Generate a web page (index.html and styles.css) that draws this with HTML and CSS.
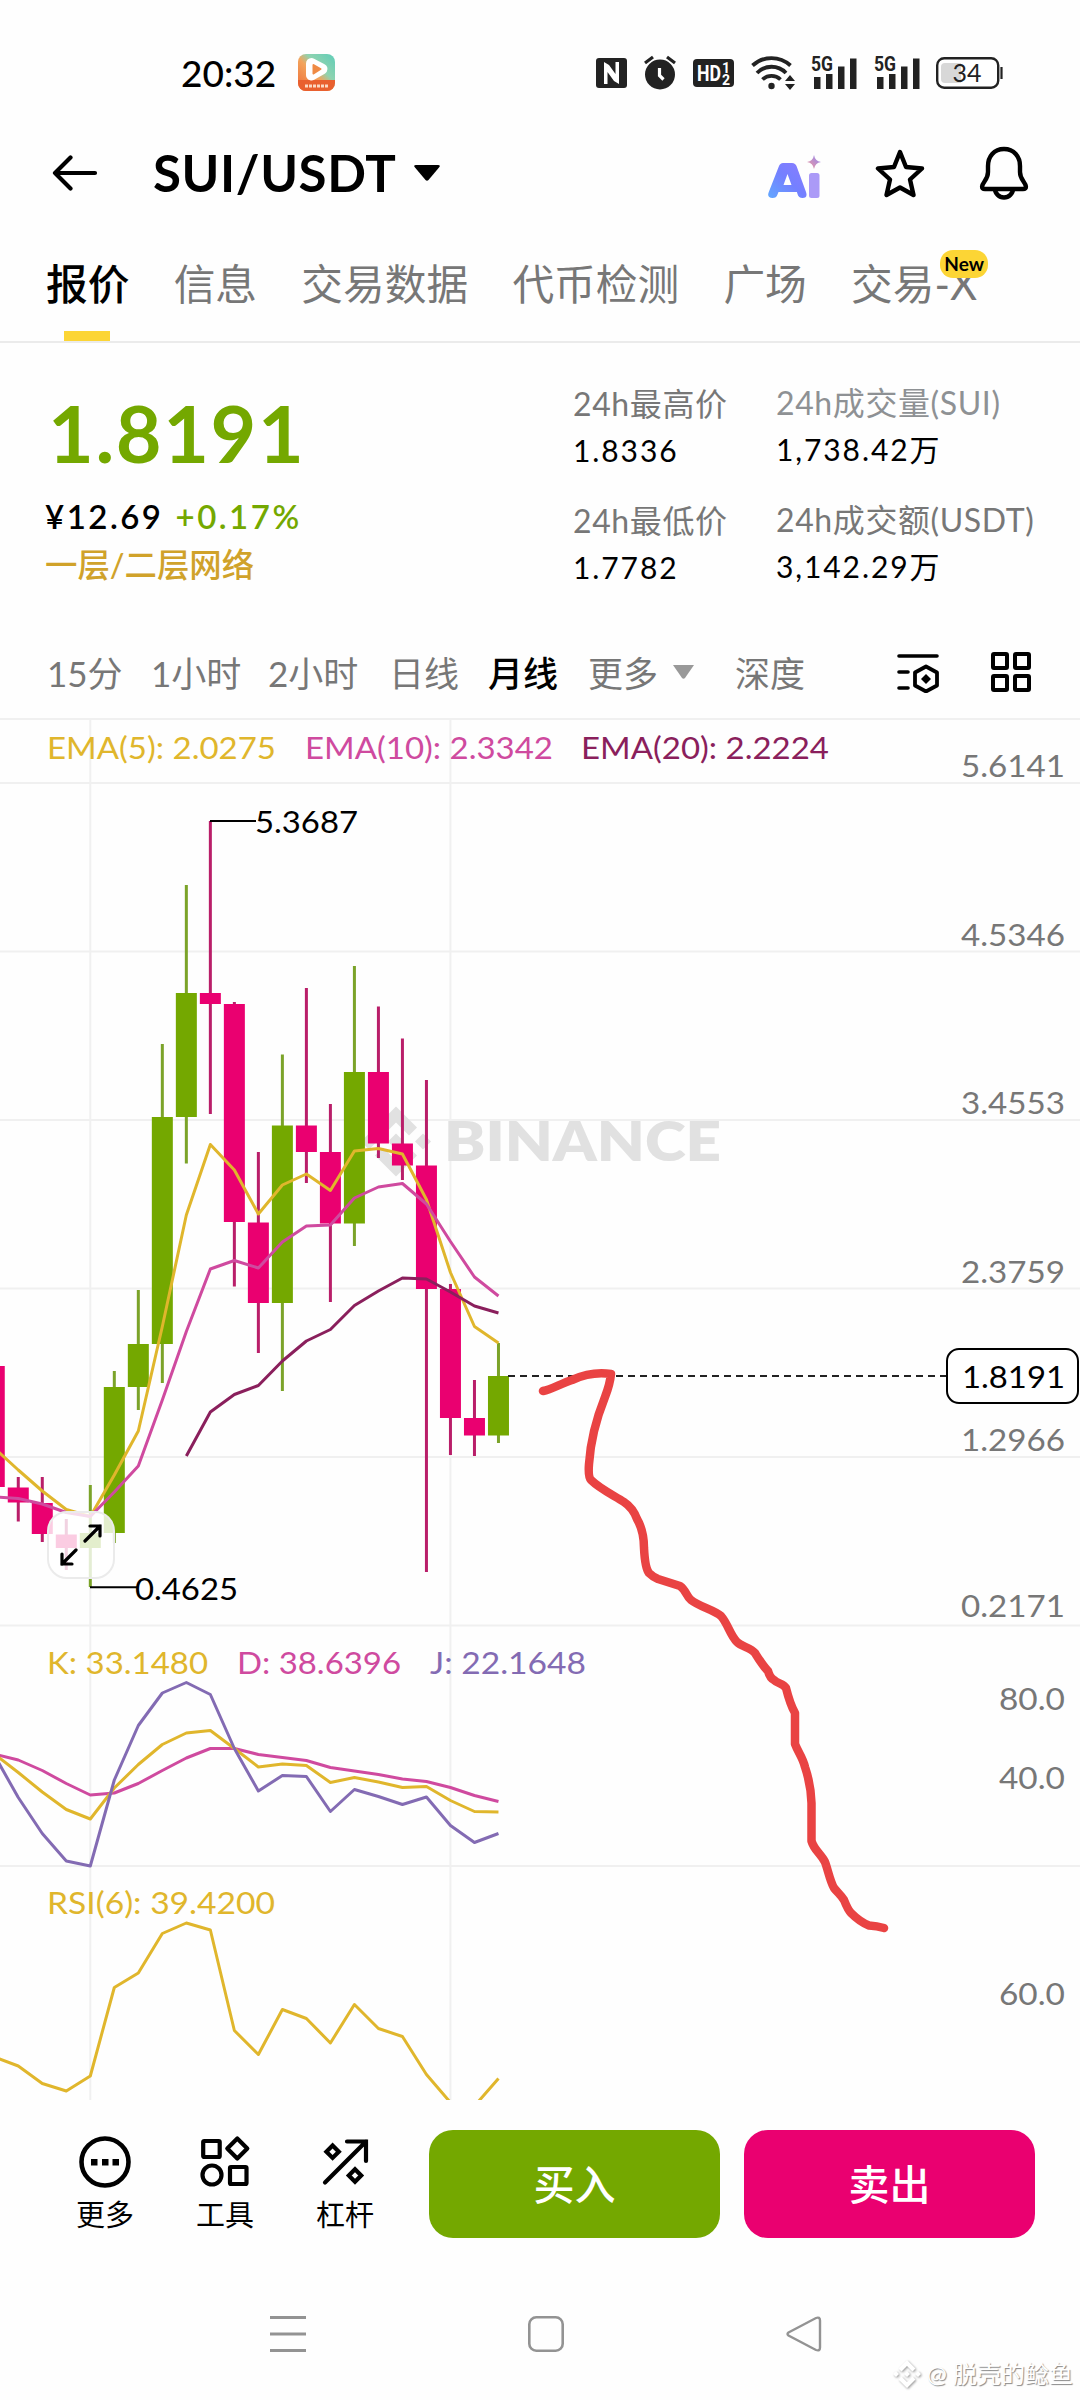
FILE: index.html
```html
<!DOCTYPE html>
<html lang="zh-CN">
<head>
<meta charset="UTF-8">
<meta name="viewport" content="width=device-width, initial-scale=1.0">
<title>SUI/USDT</title>
<link rel="stylesheet" href="styles.css">
</head>
<body>
<div class="screen">

<!-- Status bar -->
<div class="status-bar">
    <span class="time">20:32</span>
    <svg class="app-icon" width="37" height="37" viewBox="0 0 37 37">
        <defs>
            <linearGradient id="app-bg" x1="0" y1="1" x2="1" y2="0">
                <stop offset="0" stop-color="#ee6a35"/>
                <stop offset=".45" stop-color="#f3a45c"/>
                <stop offset=".62" stop-color="#8fd3b0"/>
                <stop offset="1" stop-color="#5fcdb8"/>
            </linearGradient>
        </defs>
        <rect width="37" height="37" rx="8" fill="url(#app-bg)"/>
        <path d="M0 26h37v3a8 8 0 0 1-8 8H8a8 8 0 0 1-8-8z" fill="#e9602f"/>
        <path d="M13.500 9.500l10.500 5.500-10.500 6z" fill="#fff" stroke="#fff" stroke-width="11" stroke-linejoin="round"/>
        <path d="M15.500 11l7 4-7 4.500z" fill="#ef8b45" stroke="#ef8b45" stroke-width="2" stroke-linejoin="round"/>
        <path d="M7 32h23" stroke="#fbd9c4" stroke-width="3" stroke-dasharray="3 1"/>
    </svg>
    <div class="status-icons">
        <svg width="32" height="32" viewBox="0 0 32 32">
            <rect x="0" y="1" width="31" height="30" rx="3" fill="#222"/>
            <path d="M8.500 27V7.500L20 17M11.500 12V6l11 19V5M12.500 21l8.500 5" fill="none" stroke="#fff" stroke-width="2.400" visibility="hidden"/>
            <path d="M8 27V5l5 3 6.500 9V5h3.500v22l-5-3-6.500-9v12z" fill="#fff"/>
        </svg>
        <svg width="32" height="35" viewBox="0 0 32 35">
            <circle cx="15" cy="19.500" r="15" fill="#222"/>
            <path d="M0 8l8-6M30 8l-8-6" stroke="#222" stroke-width="3.200"/>
            <path d="M14.500 13v7.500l4 4" fill="none" stroke="#fff" stroke-width="3.200"/>
        </svg>
        <svg width="41" height="30" viewBox="0 0 41 30">
            <rect y="1" width="41" height="28" rx="4" fill="#222"/>
            <text class="hd" x="4" y="22.500" textLength="24" lengthAdjust="spacingAndGlyphs">HD</text>
            <text class="hd-num" x="29" y="15">1</text>
            <text class="hd-num" x="29" y="27">2</text>
        </svg>
        <svg width="44" height="35" viewBox="0 0 44 35">
            <path d="M1.500 10.500a28 28 0 0 1 38 0M6 18a20 20 0 0 1 29 0M11.500 24.500a13 13 0 0 1 18 0" fill="none" stroke="#222" stroke-width="3.800"/>
            <circle cx="20.500" cy="31" r="3.200" fill="#222"/>
            <path d="M34 26l5-6 5 6zM34 29h10l-5 6z" fill="#222"/>
        </svg>
        <svg width="46" height="36" viewBox="0 0 46 36">
            <text class="sig" x="0" y="16" textLength="22" lengthAdjust="spacingAndGlyphs">5G</text>
            <path d="M3 22h6.500v12H3zM15 19h6.500v15H15zM27 11.500h6.500V34H27zM39 3.500h6.500V34H39z" fill="#222"/>
        </svg>
        <svg width="46" height="36" viewBox="0 0 46 36">
            <text class="sig" x="0" y="16" textLength="22" lengthAdjust="spacingAndGlyphs">5G</text>
            <path d="M3 22h6.500v12H3zM15 19h6.500v15H15zM27 11.500h6.500V34H27zM39 3.500h6.500V34H39z" fill="#222"/>
        </svg>
        <svg width="67" height="32" viewBox="0 0 67 32">
            <rect x="1.200" y="1.200" width="61" height="29.500" rx="7" fill="#fff" stroke="#222" stroke-width="2.400"/>
            <path d="M9 6h16v20H9a4 4 0 0 1-4-4V10a4 4 0 0 1 4-4z" fill="#d8d8d8"/>
            <path d="M65.500 10v12" stroke="#222" stroke-width="2.200"/>
            <text class="bat" x="31" y="24.500">34</text>
        </svg>
    </div>
</div>

<!-- Header -->
<div class="header">
    <svg class="back" width="46" height="36" viewBox="0 0 46 36">
        <path d="M43 18H3M18.500 2.500L3 18l15.500 15.500" fill="none" stroke="#000" stroke-width="4.200" stroke-linecap="round" stroke-linejoin="round"/>
    </svg>
    <h1 class="pair">SUI/USDT</h1>
    <svg class="pair-caret" width="26" height="16" viewBox="0 0 26 16">
        <path d="M2 0h22q3 0 1 2.500L14.500 15q-1.500 1.500-3 0L1 2.500Q-1 0 2 0z"/>
    </svg>
    <div class="header-icons">
        <svg width="53" height="56" viewBox="0 0 53 56">
            <defs>
                <linearGradient id="ai" x1="0" y1="1" x2="1" y2="0">
                    <stop offset="0" stop-color="#62a8ff"/>
                    <stop offset=".5" stop-color="#7480ff"/>
                    <stop offset="1" stop-color="#8a7cff"/>
                </linearGradient>
                <linearGradient id="ai-dot" x1="0" y1="1" x2="1" y2="0">
                    <stop offset="0" stop-color="#f39a9a"/>
                    <stop offset="1" stop-color="#8f86f5"/>
                </linearGradient>
            </defs>
            <path d="M15 18h9q3.500 0 4.700 3.500L38 47q2 6-3.500 6-4 0-5-4l-.6-2H10.500l-1 2.500Q8.500 53 4.500 53-1.500 53 .8 47l10-25.500Q12 18 15 18zM19.500 29l-4 11h8z" fill="url(#ai)" fill-rule="evenodd"/>
            <rect x="41" y="28" width="10.500" height="25" rx="2.500" fill="#ab9af7"/>
            <path d="M46 10q1 6 7 7-6 1-7 7-1-6-7-7 6-1 7-7z" fill="url(#ai-dot)"/>
        </svg>
        <svg width="50" height="50" viewBox="0 0 50 50">
            <path d="M25 4l6 15 16 1.500-12 11 3.500 15.500L25 39.500 11.500 47 15 31.500 3 20.500 19 19z" fill="none" stroke="#000" stroke-width="4.400" stroke-linejoin="round"/>
        </svg>
        <svg width="50" height="54" viewBox="0 0 50 54">
            <path d="M25 3C15 3 9 10.500 9 20v6c0 4-1 6-3.500 9.500C3 39 1.500 43 6 43h38c4.500 0 3-4 .5-7.500C42 32 41 30 41 26v-6C41 10.500 35 3 25 3z" fill="none" stroke="#000" stroke-width="4.400"/>
            <path d="M16 43c0 4.500 4 8.500 9 8.500s9-4 9-8.500" fill="none" stroke="#000" stroke-width="4.400"/>
        </svg>
    </div>
</div>

<!-- Tabs -->
<div class="tabs">
    <div class="tab active">报价</div>
    <div class="tab">信息</div>
    <div class="tab">交易数据</div>
    <div class="tab">代币检测</div>
    <div class="tab">广场</div>
    <div class="tab">交易-X<span class="new-badge">New</span></div>
</div>

<!-- Price and 24h stats -->
<div class="ticker">
    <div class="price-box">
        <div class="price">1.8191</div>
        <div class="price-sub"><span class="cny">¥12.69</span><span class="change">+0.17%</span></div>
        <div class="tag">一层/二层网络</div>
    </div>
    <div class="stats stats-price">
        <div class="stat"><div class="label">24h最高价</div><div class="value">1.8336</div></div>
        <div class="stat"><div class="label">24h最低价</div><div class="value">1.7782</div></div>
    </div>
    <div class="stats">
        <div class="stat"><div class="label light">24h成交量(SUI)</div><div class="value">1,738.42万</div></div>
        <div class="stat"><div class="label">24h成交额(USDT)</div><div class="value">3,142.29万</div></div>
    </div>
</div>

<!-- Intervals -->
<div class="intervals">
    <span class="i-15m">15分</span>
    <span class="i-1h">1小时</span>
    <span class="i-2h">2小时</span>
    <span class="i-1d">日线</span>
    <span class="i-1m active">月线</span>
    <span class="i-more">更多<svg width="21" height="14" viewBox="0 0 21 14"><path d="M0 0h21L12 13q-1.500 1.500-3 0z" fill="#999"/></svg></span>
    <span class="i-depth">深度</span>
    <div class="chart-tools">
        <svg width="43" height="42" viewBox="0 0 43 42">
            <path d="M2 5h38M2 21h9M2 37h9" stroke="#000" stroke-width="3.600" stroke-linecap="round"/>
            <path d="M29 15.500l11 6v13l-11 6-11-6v-13z" fill="none" stroke="#000" stroke-width="3.800" stroke-linejoin="round"/>
            <path d="M29 23l5 5-5 5-5-5z"/>
        </svg>
        <svg width="40" height="40" viewBox="0 0 40 40" fill="none" stroke="#000" stroke-width="4">
            <rect x="2" y="2" width="14" height="14" rx="1"/>
            <rect x="24" y="2" width="14" height="14" rx="1"/>
            <rect x="2" y="24" width="14" height="14" rx="1"/>
            <rect x="24" y="24" width="14" height="14" rx="1"/>
        </svg>
    </div>
</div>

<!-- Chart -->
<svg class="chart" width="1080" height="1382" viewBox="0 718 1080 1382">
    <g class="grid">
        <path d="M0 719H1080M0 783H1080M0 951.500H1080M0 1120H1080M0 1288.500H1080M0 1457H1080M0 1625.500H1080M0 1866H1080M90.300 719V2100M450.400 719V2100"/>
    </g>

    <g class="logo-mark">
        <path transform="translate(396 1141.500)" d="M-21-14L0-35 21-14 13-6 0-19-13-6zM-21 14L0 35 21 14 13 6 0 19-13 6zM-35 0l8-8 8 8-8 8zM19 0l8-8 8 8-8 8zM-8 0l8-8 8 8-8 8z"/>
        <text x="444" y="1161" textLength="277" lengthAdjust="spacingAndGlyphs">BINANCE</text>
    </g>

    <g id="candles"></g>
    <g id="lines"></g>

    <g class="extreme">
        <path d="M210 821H256M90 1587.300H137"/>
        <text x="255" y="833" textLength="103" lengthAdjust="spacingAndGlyphs">5.3687</text>
        <text x="135" y="1600" textLength="103" lengthAdjust="spacingAndGlyphs">0.4625</text>
    </g>

    <g class="legend">
        <text class="yellow" x="47" y="759" textLength="229" lengthAdjust="spacingAndGlyphs">EMA(5): 2.0275</text>
        <text class="pink" x="305" y="759" textLength="248" lengthAdjust="spacingAndGlyphs">EMA(10): 2.3342</text>
        <text class="plum" x="581" y="759" textLength="248" lengthAdjust="spacingAndGlyphs">EMA(20): 2.2224</text>
        <text class="yellow" x="47" y="1674" textLength="161" lengthAdjust="spacingAndGlyphs">K: 33.1480</text>
        <text class="pink" x="237" y="1674" textLength="164" lengthAdjust="spacingAndGlyphs">D: 38.6396</text>
        <text class="violet" x="430" y="1674" textLength="156" lengthAdjust="spacingAndGlyphs">J: 22.1648</text>
        <text class="yellow" x="47" y="1914" textLength="228" lengthAdjust="spacingAndGlyphs">RSI(6): 39.4200</text>
    </g>

    <g class="axis">
        <text x="961" y="777" textLength="104" lengthAdjust="spacingAndGlyphs">5.6141</text>
        <text x="961" y="946" textLength="104" lengthAdjust="spacingAndGlyphs">4.5346</text>
        <text x="961" y="1114" textLength="104" lengthAdjust="spacingAndGlyphs">3.4553</text>
        <text x="961" y="1283" textLength="104" lengthAdjust="spacingAndGlyphs">2.3759</text>
        <text x="961" y="1451" textLength="104" lengthAdjust="spacingAndGlyphs">1.2966</text>
        <text x="961" y="1617" textLength="104" lengthAdjust="spacingAndGlyphs">0.2171</text>
        <text x="999" y="1710" textLength="66" lengthAdjust="spacingAndGlyphs">80.0</text>
        <text x="999" y="1789" textLength="66" lengthAdjust="spacingAndGlyphs">40.0</text>
        <text x="999" y="2005" textLength="66" lengthAdjust="spacingAndGlyphs">60.0</text>
    </g>

    <!-- last price -->
    <path class="last-line" d="M508 1376H947"/>
    <rect class="last-box" x="947" y="1349" width="131" height="54" rx="12"/>
    <text class="last-text" x="962" y="1388" textLength="103" lengthAdjust="spacingAndGlyphs">1.8191</text>

    <!-- fullscreen button -->
    <rect class="full-btn" x="48" y="1512" width="66" height="66" rx="19"/>
    <path class="full-arrows" d="M85 1541L100 1526M90 1526H100V1536M76 1550L62 1564M62 1554V1564H72"/>

    <!-- hand drawn line -->
    <path class="sketch" d="M543 1391C552 1389 560 1384 572 1380Q592 1371 611 1374Q610 1384 605 1397Q591 1432 589 1464Q588 1477 591 1480C600 1489 615 1496 624 1502Q633 1508 637 1519Q644 1531 644 1548Q645 1568 649 1573Q653 1577 658 1579L680 1586C686 1590 686 1596 691 1600C700 1607 714 1610 721 1616C728 1624 730 1635 737 1642C742 1647 750 1647 755 1653C760 1661 763 1666 768 1671Q770 1678 774 1680C778 1684 783 1683 786 1688C788 1696 791 1706 795 1713V1744C798 1752 803 1758 805 1767Q811 1785 811.500 1803V1841C814 1850 821 1854 825 1862C828 1870 830 1881 834 1888C838 1893 841 1895 844 1900C846 1905 848 1910 851 1913Q860 1922 869 1925.500Q877 1926 884 1928"/>
</svg>

<!-- Bottom actions -->
<div class="actions">
    <div class="action">
        <svg width="52" height="54" viewBox="0 0 52 54">
            <circle cx="26" cy="27" r="23.500" fill="none" stroke="#000" stroke-width="4.600"/>
            <path d="M12 24h6.500v6.500H12zM23 24h6.500v6.500H23zM33.500 24H40v6.500h-6.500z"/>
        </svg>
        <span>更多</span>
    </div>
    <div class="action">
        <svg width="52" height="54" viewBox="0 0 52 54" fill="none" stroke="#000" stroke-width="4.200">
            <rect x="4.200" y="6" width="16.500" height="16" rx="1"/>
            <path d="M38.300 3.500l10 10-10 10-10-10z" stroke-linejoin="round"/>
            <circle cx="13" cy="40" r="9.500"/>
            <rect x="31" y="32" width="16.500" height="17" rx="1"/>
        </svg>
        <span>工具</span>
    </div>
    <div class="action">
        <svg width="52" height="54" viewBox="0 0 52 54" fill="none" stroke="#000" stroke-width="4.200">
            <path d="M6 47.500L47 6.500M28 6.500H47V26" stroke-linecap="round"/>
            <path d="M13.600 10.500l6.200 6.200-6.200 6.200-6.200-6.200zM36 34.300l6.200 6.200-6.200 6.200-6.200-6.200z"/>
        </svg>
        <span>杠杆</span>
    </div>
    <button class="btn buy">买入</button>
    <button class="btn sell">卖出</button>
</div>

<!-- System navigation -->
<div class="sys-nav">
    <svg width="36" height="38" viewBox="0 0 36 38"><path d="M0 2.500h36M0 19h36M0 35.500h36" stroke="#939393" stroke-width="3"/></svg>
    <svg width="36" height="38" viewBox="0 0 36 38"><rect x="1.300" y="2.300" width="33.400" height="33.400" rx="7" fill="none" stroke="#939393" stroke-width="2.600"/></svg>
    <svg width="36" height="38" viewBox="0 0 36 38"><path d="M2.500 17.500L30 3q4-1.500 4 2.500v27q0 4-4 2.500L2.500 20.500q-2-1.500 0-3z" fill="none" stroke="#939393" stroke-width="2.400"/></svg>
</div>

<div class="author">
    <svg width="28" height="28" viewBox="-14 -14 28 28">
        <path d="M-8.500-5.500L0-14l8.500 8.500-3 3L0-8l-5.500 5.500zM-8.500 5.500L0 14l8.500-8.500-3-3L0 8l-5.500-5.500zM-14 0l3-3 3 3-3 3zM8 0l3-3 3 3-3 3zM-3 0l3-3 3 3-3 3z" fill="#fff"/>
    </svg>
    <span>@ 脱壳的鲶鱼</span>
</div>

</div>

<script>
var STEP = 24.01;
var X0 = 90.3;

// [slot, high, top, bottom, low, up]
var candles = [
    [-4, 1366, 1366, 1487, 1487, 0],
    [-3, 1477, 1487.5, 1502.5, 1521.5, 0],
    [-2, 1477, 1503, 1534, 1542, 0],
    [-1, 1519, 1534.5, 1548, 1570, 0],
    [0, 1485, 1533, 1548, 1587, 1],
    [1, 1371, 1387, 1533, 1543, 1],
    [2, 1290, 1344, 1387, 1410, 1],
    [3, 1044, 1117, 1344, 1383, 1],
    [4, 885, 993, 1117, 1163.5, 1],
    [5, 821, 993, 1004, 1114, 0],
    [6, 1002, 1004, 1222, 1286.5, 0],
    [7, 1152, 1222.5, 1303, 1353, 0],
    [8, 1054.5, 1125.5, 1303, 1391, 1],
    [9, 988, 1125.5, 1152, 1183, 0],
    [10, 1104, 1152, 1223.5, 1302, 0],
    [11, 966, 1072, 1223.5, 1246, 1],
    [12, 1006.5, 1072, 1143.5, 1158, 0],
    [13, 1038.5, 1143.5, 1165.5, 1180, 0],
    [14, 1080, 1165.5, 1289, 1572, 0],
    [15, 1284, 1289, 1418, 1455, 0],
    [16, 1380, 1418, 1435.5, 1456, 0],
    [17, 1343, 1376, 1435.5, 1443, 1]
];

// each series starts at its first slot
var series = [
    { color: '#e0b62c', from: -4, y: [1448, 1470, 1491, 1509.5, 1516.5, 1475, 1431, 1326.5, 1215, 1144.5, 1170, 1214, 1185, 1174, 1190.5, 1151, 1148.5, 1154, 1199.5, 1272.5, 1326.5, 1343] },
    { color: '#cf4a9f', from: -4, y: [1497, 1498.5, 1504, 1512.5, 1516.5, 1492, 1466, 1400, 1331.5, 1269, 1260.5, 1268, 1242, 1226, 1225, 1198, 1187, 1183.5, 1204, 1241.5, 1277, 1296] },
    { color: '#8a1f5c', from: 4, y: [1456, 1412, 1394.5, 1385.5, 1361, 1341, 1329.5, 1305.5, 1291, 1278, 1279, 1292, 1306, 1313] },
    { color: '#cf4a9f', from: -4, y: [1754, 1760, 1770.5, 1783.5, 1795, 1793, 1783.5, 1770.5, 1758, 1748.5, 1748.5, 1754.5, 1757.5, 1760.5, 1767.5, 1771, 1774.5, 1779, 1781.5, 1787.5, 1795.5, 1801.5] },
    { color: '#e0b62c', from: -4, y: [1754, 1772.5, 1792, 1809.5, 1819, 1788, 1764.5, 1744.5, 1733, 1730.5, 1748.5, 1767, 1764, 1765.5, 1782.5, 1777.5, 1782, 1787.5, 1786.5, 1800.5, 1811.5, 1812] },
    { color: '#836bb3', from: -4, y: [1755, 1797.5, 1833.5, 1861, 1866, 1780, 1725.5, 1693, 1682.5, 1694.5, 1748.5, 1791, 1775.5, 1776.5, 1811.5, 1789.5, 1796.5, 1804.5, 1797, 1825.5, 1842.5, 1833.5] },
    { color: '#e0b62c', from: -4, y: [2057, 2066, 2083.5, 2091, 2076, 1987.5, 1973, 1933.5, 1923, 1930, 2030.5, 2054.5, 2009.5, 2018.5, 2043, 2004.5, 2028.5, 2036.5, 2074.5, 2102.5, 2106, 2078.5] }
];

function slotX(i) {
    return X0 + i * STEP;
}

var html = '';
candles.forEach(function(c) {
    var x = slotX(c[0]);
    var cls = c[5] ? 'up' : 'down';
    html += '<rect class="wick-' + cls + '" x="' + (x - 1.5) + '" y="' + c[1] + '" width="3" height="' + (c[4] - c[1]) + '"/>';
    html += '<rect class="body-' + cls + '" x="' + (x - 10.5) + '" y="' + c[2] + '" width="21" height="' + (c[3] - c[2]) + '"/>';
});
document.getElementById('candles').innerHTML = html;

html = '';
series.forEach(function(s) {
    var points = s.y.map(function(y, i) {
        return slotX(s.from + i) + ',' + y;
    });
    html += '<polyline points="' + points.join(' ') + '" stroke="' + s.color + '"/>';
});
document.getElementById('lines').innerHTML = html;
</script>

</body>
</html>
```
FILE: styles.css
```css
* {
    box-sizing: border-box;
}

body {
    margin: 0;
    background: #fff;
    font-family: Lato, "Noto Sans CJK SC", sans-serif;
    color: #000;
}

svg {
    display: block;
    flex: none;
}

.screen {
    position: relative;
    width: 1080px;
    height: 2400px;
    overflow: hidden;
    background: #fefefe;
}

/* Status bar */
.status-bar {
    display: flex;
    align-items: center;
    height: 145px;
    padding: 0 77px 0 181px;
}

.time {
    width: 117px;
    font-size: 37px;
    font-weight: 500;
    line-height: 40px;
}

.status-icons {
    display: flex;
    align-items: center;
    gap: 16.5px;
    margin-left: auto;
}

.hd {
    font: 700 22px Roboto, sans-serif;
    fill: #fff;
}

.hd-num {
    font: 700 14px Roboto, sans-serif;
    fill: #fff;
}

.sig {
    font: 700 20px Roboto, sans-serif;
    fill: #222;
}

.status-icons svg {
    overflow: visible;
}

.bat {
    font: 400 25px Lato, sans-serif;
    text-anchor: middle;
    fill: #222;
}

/* Header */
.header {
    display: flex;
    align-items: center;
    height: 56px;
    padding: 0 51px 0 52px;
}

.pair {
    width: 245px;
    margin: 0 16px 0 55px;
    padding-bottom: 1px;
    font-size: 51px;
    font-weight: 700;
    line-height: 54px;
    letter-spacing: 0.6px;
    white-space: nowrap;
}

.header-icons {
    display: flex;
    align-items: center;
    gap: 54px;
    margin-left: auto;
}

/* Tabs */
.tabs {
    display: flex;
    gap: 44.3px;
    height: 142px;
    padding: 53px 0 0 46px;
    border-bottom: 2px solid #ebebeb;
    font-size: 41.7px;
    line-height: 60px;
    color: #777;
}

.tab {
    position: relative;
    height: 87px;
    white-space: nowrap;
}

.tab.active {
    color: #000;
    font-weight: 500;
}

.tab.active::after {
    content: "";
    position: absolute;
    left: 18px;
    bottom: 0;
    width: 46px;
    height: 10px;
    background: #fcd535;
}

.new-badge {
    position: absolute;
    left: 89px;
    top: -4px;
    width: 48px;
    height: 28px;
    border-radius: 13px;
    background: #fcd535;
    color: #000;
    font-size: 19px;
    font-weight: 700;
    line-height: 27px;
    text-align: center;
}

/* Ticker */
.ticker {
    display: flex;
    height: 282px;
    padding: 36px 0 0 45px;
}

.price-box {
    width: 528px;
}

.price {
    padding: 7px 0 0 3px;
    font-size: 79px;
    font-weight: 700;
    line-height: 94px;
    letter-spacing: 1.6px;
    color: #74a800;
}

.price-sub {
    display: flex;
    gap: 12px;
    margin-top: 16px;
    font-size: 33px;
    font-weight: 600;
    line-height: 40px;
    letter-spacing: 2.5px;
}

.change {
    color: #74a800;
}

.tag {
    margin-top: 6px;
    font-size: 32.4px;
    font-weight: 500;
    line-height: 46px;
    color: #d0a22a;
}

.stats {
    display: flex;
    flex-direction: column;
    gap: 23px;
}

.stats-price {
    width: 203px;
    padding-top: 1px;
}

.stat {
    white-space: nowrap;
}

.label {
    font-size: 32px;
    line-height: 47px;
    letter-spacing: 0.6px;
    color: #777;
}

.label.light {
    color: #8e9194;
}

.value {
    font-size: 30px;
    line-height: 47px;
    letter-spacing: 1.9px;
}

/* Intervals */
.intervals {
    display: flex;
    align-items: center;
    height: 93px;
    padding: 0 49px 0 47px;
    font-size: 35px;
    color: #777;
    white-space: nowrap;
}

.i-15m { width: 104px; }
.i-1h { width: 117px; }
.i-2h { width: 121px; }
.i-1d { width: 99px; }
.i-1m { width: 100px; }

.i-more {
    display: flex;
    align-items: center;
    gap: 15px;
    width: 147px;
}

.intervals .active {
    color: #000;
    font-weight: 500;
}

.chart-tools {
    display: flex;
    align-items: center;
    gap: 51px;
    margin-left: auto;
}

/* Chart */
.chart text {
    font-size: 31px;
}

.grid path {
    fill: none;
    stroke: #f0f0f0;
    stroke-width: 2;
}

.logo-mark {
    fill: #e1e1e1;
}

.chart .logo-mark text {
    font-size: 54px;
    font-weight: 800;
}

.body-up { fill: #74a800; }
.wick-up { fill: #7ba329; }
.body-down { fill: #ea0070; }
.wick-down { fill: #b91e69; }

#lines polyline {
    fill: none;
    stroke-width: 3;
    stroke-linejoin: round;
}

.extreme path {
    stroke: #000;
    stroke-width: 2;
}

.yellow { fill: #e0b62c; }
.pink { fill: #cf4a9f; }
.plum { fill: #8a1f5c; }
.violet { fill: #836bb3; }

.axis {
    fill: #777;
}

.last-line {
    stroke: #222;
    stroke-width: 2;
    stroke-dasharray: 7 5;
}

.last-box {
    fill: #fff;
    stroke: #000;
    stroke-width: 2;
}

.full-btn {
    fill: rgba(255, 255, 255, 0.8);
    stroke: #ebebeb;
    stroke-width: 2;
}

.full-arrows {
    fill: none;
    stroke: #000;
    stroke-width: 3.2;
    stroke-linecap: round;
}

.sketch {
    fill: none;
    stroke: #e94343;
    stroke-width: 8.5;
    stroke-linecap: round;
    stroke-linejoin: round;
}

/* Bottom actions */
.actions {
    display: flex;
    height: 182px;
    padding: 30px 45px 0 45px;
}

.action {
    display: flex;
    flex-direction: column;
    align-items: center;
    width: 120px;
    padding-top: 5px;
    font-size: 29px;
    line-height: 44px;
}

.action span {
    margin-top: 4px;
}

.btn {
    width: 291px;
    height: 108px;
    padding: 0 0 4px;
    border: none;
    border-radius: 24px;
    color: #fff;
    font-family: inherit;
    font-size: 41px;
    font-weight: 500;
}

.buy {
    margin-left: 24px;
    background: #74a800;
}

.sell {
    margin-left: 24px;
    background: #ea0070;
}

/* System navigation */
.sys-nav {
    display: flex;
    justify-content: space-between;
    padding: 33px 258px 0 270px;
}

.author {
    position: absolute;
    right: 7px;
    bottom: 8px;
    display: flex;
    align-items: center;
    gap: 6px;
    color: #fff;
    font-size: 24px;
    line-height: 36px;
    text-shadow: 1px 1px 1px #888;
}

.author svg {
    overflow: visible;
    filter: drop-shadow(1px 1px 1px #999);
}
```
